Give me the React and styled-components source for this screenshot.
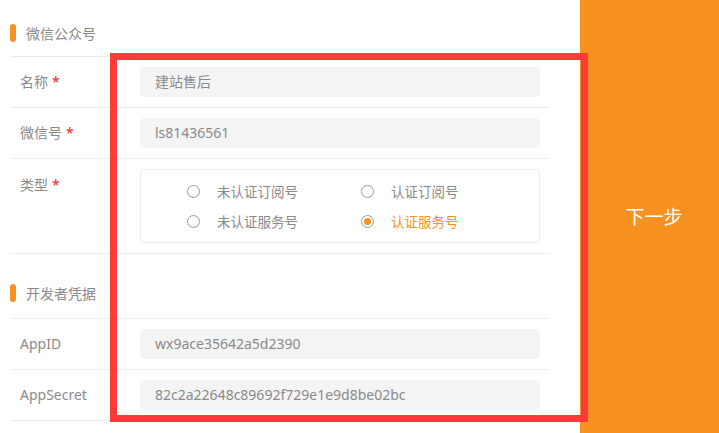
import React, { useState } from "react";
import styled, { createGlobalStyle } from "styled-components";

const GlobalStyle = createGlobalStyle`
  html, body {
    margin: 0;
    padding: 0;
    background: #fff;
    font-family: "Noto Sans", "Noto Sans CJK SC", sans-serif;
  }
  * { box-sizing: border-box; }
`;

const Page = styled.div`
  position: relative;
  display: flex;
  width: 719px;
  height: 433px;
  overflow: hidden;
`;

const Form = styled.div`
  width: 580px;
  flex-shrink: 0;
  padding: 0 30px 0 10px;
`;

const SectionHeader = styled.div`
  display: flex;
  align-items: center;
  gap: 10px;
  padding-top: ${(p) => p.$top}px;
  padding-bottom: ${(p) => p.$bottom || 0}px;
  height: ${(p) => p.$top + (p.$bottom || 0) + 47}px;
  border-bottom: 1px solid #ececec;
  font-size: 14px;
  color: #8a8a8a;
`;

const Bar = styled.span`
  width: 6px;
  height: 18px;
  border-radius: 3px;
  background: #f7911f;
`;

const Row = styled.div`
  display: flex;
  align-items: ${(p) => (p.$top ? "flex-start" : "center")};
  padding: 10px 10px 10px 0;
  border-bottom: 1px solid #ececec;
`;

const Label = styled.div`
  width: 130px;
  flex-shrink: 0;
  padding-left: 10px;
  font-size: 14px;
  color: #8a8a8a;
  line-height: ${(p) => (p.$top ? "32px" : "30px")};
`;

const Star = styled.span`
  color: #e8262b;
  margin-left: 4px;
`;

const Input = styled.div`
  flex: 1;
  height: 30px;
  line-height: 30px;
  padding-left: 15px;
  border-radius: 5px;
  background: #f4f4f4;
  font-size: 14px;
  color: #8a8a8a;
`;

const RadioBox = styled.div`
  flex: 1;
  display: grid;
  grid-template-columns: 174px 174px;
  padding: 6px 0 6px 46px;
  border: 1px solid #ececec;
  border-radius: 5px;
`;

const RadioItem = styled.label`
  display: flex;
  align-items: center;
  height: 30px;
  font-size: 13.5px;
  cursor: pointer;
  color: ${(p) => (p.$checked ? "#f7911f" : "#8a8a8a")};
`;

const Circle = styled.span`
  width: 13px;
  height: 13px;
  margin-right: 17px;
  border: 1px solid #9a9a9a;
  border-radius: 50%;
  display: flex;
  align-items: center;
  justify-content: center;
  &::after {
    content: "";
    width: 7px;
    height: 7px;
    border-radius: 50%;
    background: ${(p) => (p.$checked ? "#f7911f" : "transparent")};
  }
`;

const NextPanel = styled.div`
  flex: 1;
  background: #f7911f;
  color: #fff;
  font-size: 19px;
  display: flex;
  align-items: center;
  justify-content: center;
  padding-left: 9px;
  padding-bottom: 1px;
`;

const Highlight = styled.div`
  position: absolute;
  left: 110px;
  top: 53px;
  width: 478px;
  height: 369px;
  border: 7px solid #fb3a3a;
  pointer-events: none;
`;

const types = ["未认证订阅号", "认证订阅号", "未认证服务号", "认证服务号"];

const App = () => {
  const [type, setType] = useState("认证服务号");

  return (
    <Page>
      <GlobalStyle />
      <Form>
        <SectionHeader $top={10}>
          <Bar />
          微信公众号
        </SectionHeader>
        <Row>
          <Label>名称<Star>*</Star></Label>
          <Input>建站售后</Input>
        </Row>
        <Row>
          <Label>微信号<Star>*</Star></Label>
          <Input>ls81436561</Input>
        </Row>
        <Row $top>
          <Label $top>类型<Star>*</Star></Label>
          <RadioBox>
            {types.map((t) => (
              <RadioItem key={t} $checked={type === t} onClick={() => setType(t)}>
                <Circle $checked={type === t} />
                {t}
              </RadioItem>
            ))}
          </RadioBox>
        </Row>
        <SectionHeader $top={16} $bottom={2}>
          <Bar />
          开发者凭据
        </SectionHeader>
        <Row>
          <Label>AppID</Label>
          <Input>wx9ace35642a5d2390</Input>
        </Row>
        <Row>
          <Label>AppSecret</Label>
          <Input>82c2a22648c89692f729e1e9d8be02bc</Input>
        </Row>
      </Form>
      <NextPanel>下一步</NextPanel>
      <Highlight />
    </Page>
  );
};

export default App;
